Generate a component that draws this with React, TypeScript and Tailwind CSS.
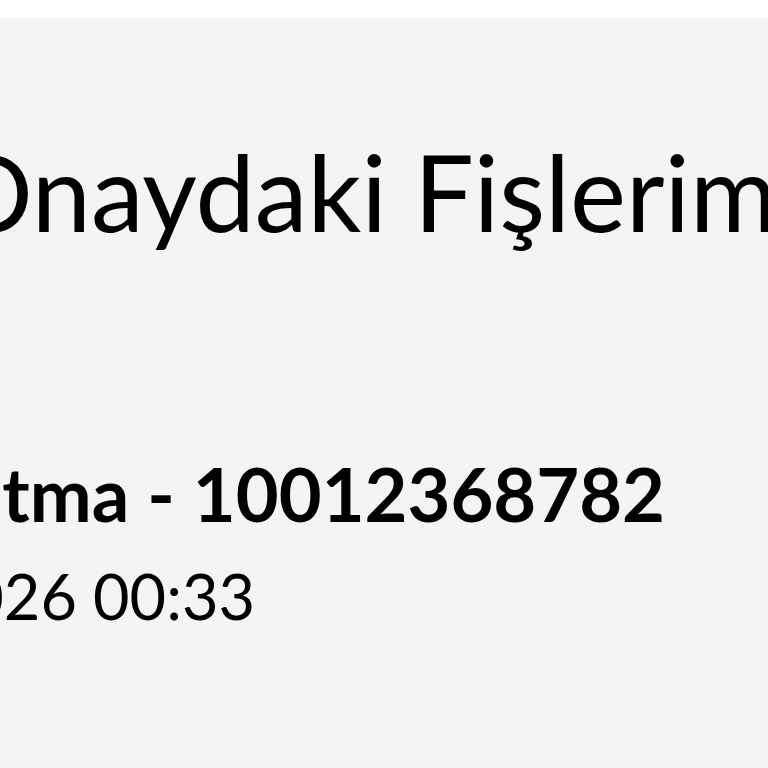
const App = () => {
  return (
    <div className="w-[768px] h-[768px] overflow-hidden bg-[#f4f4f4] font-['Lato','Noto_Sans',sans-serif] text-black">
      <div className="h-[18px] bg-white" />
      <div className="flex flex-col">
        <div className="mt-[120px] ml-[-52px] whitespace-nowrap text-[106px] leading-none">
          Onaydaki Fişlerim
        </div>
        <div className="mt-[213px] flex w-[665px] justify-end whitespace-nowrap text-[74px] font-bold leading-none">
          Araç Isıtma - 10012368782
        </div>
        <div className="mt-[33px] flex w-[255px] justify-end whitespace-nowrap text-[63px] leading-none">
          14.01.2026 00:33
        </div>
      </div>
    </div>
  );
};

export default App;
